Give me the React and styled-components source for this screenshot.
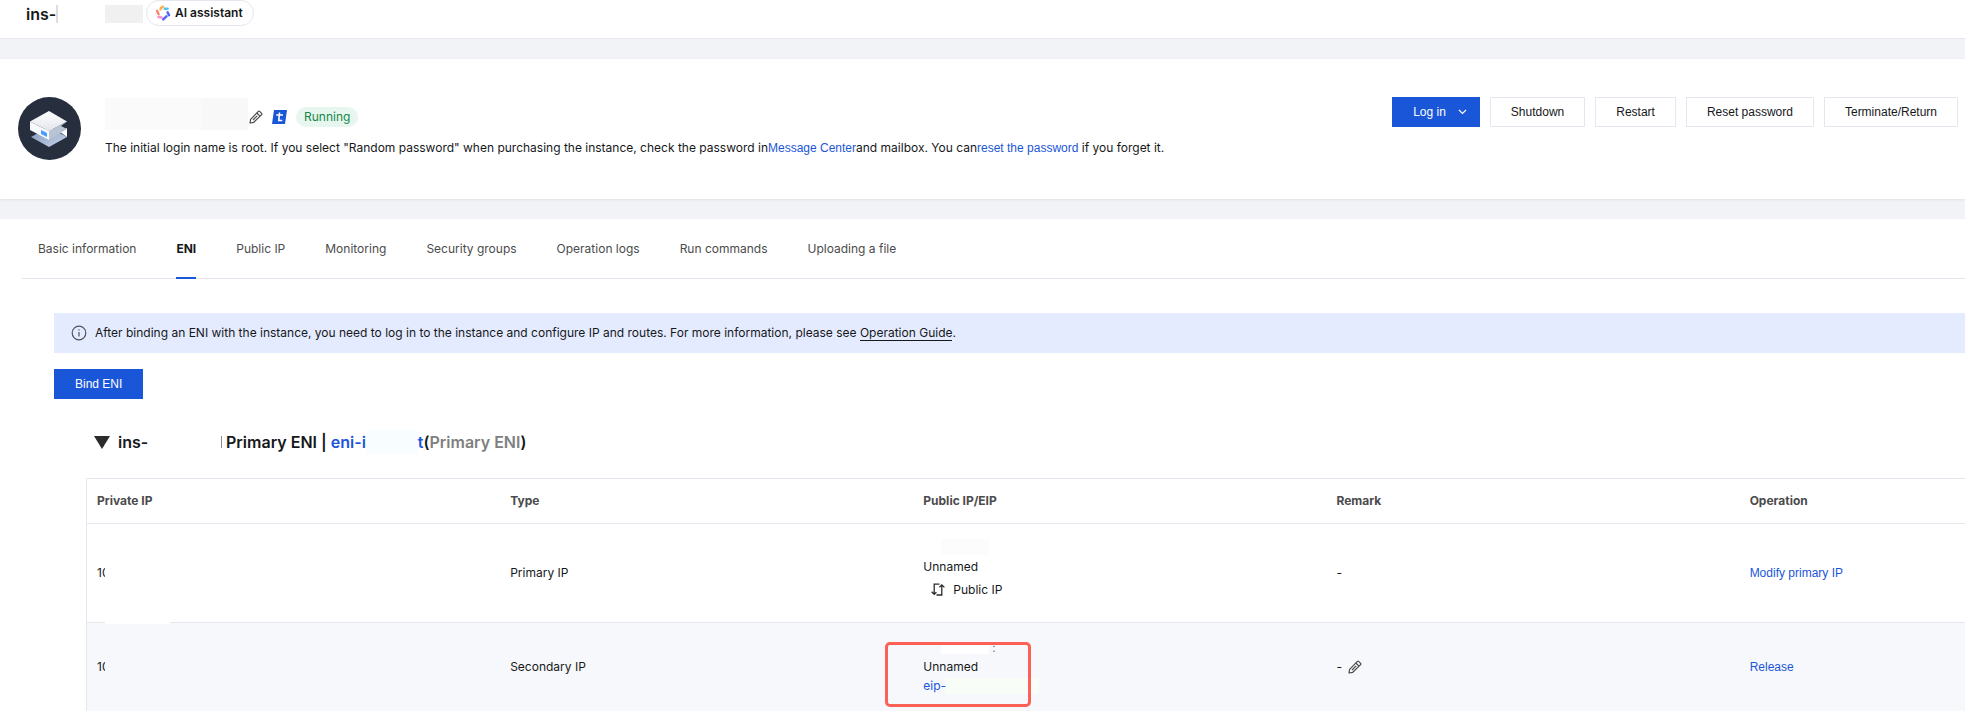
import React from "react";
import styled, { createGlobalStyle } from "styled-components";

const GlobalStyle = createGlobalStyle`
  * {
    box-sizing: border-box;
  }

  body {
    margin: 0;
    overflow-x: hidden;
    background: #f2f3f7;
    color: #16181a;
    font-family: Inter, "Liberation Sans", sans-serif;
    font-size: 12px;
    line-height: 18px;
  }
`;

const TopBar = styled.header`
  display: flex;
  align-items: flex-start;
  height: 39px;
  padding-left: 26px;
  background: #ffffff;
  border-bottom: 1px solid #e5e7ef;
`;

const PageTitle = styled.h1`
  width: 79px;
  margin: 5px 0 0;
  font-size: 16px;
  font-weight: 600;
  line-height: 18px;
`;

const Caret = styled.span`
  display: inline-block;
  width: ${props => props.$width || 1}px;
  height: ${props => props.$height}px;
  background: ${props => props.$color};
  vertical-align: top;
`;

const Mask = styled.span`
  flex: none;
  display: block;
  width: ${props => props.$width}px;
  height: ${props => props.$height}px;
  background: ${props => props.$color};
`;

const HeaderMask = styled(Mask)`
  margin: 5px 3px 0 0;
`;

const AssistantButton = styled.button`
  display: flex;
  align-items: center;
  gap: 4px;
  height: 26px;
  padding: 0 10px 0 8px;
  border: 1px solid #e5e7ef;
  border-radius: 13px;
  background: #ffffff;
  color: #16181a;
  font: 600 12px/18px Inter, sans-serif;
`;

const Panel = styled.section`
  background: #ffffff;
  margin-top: 20px;
`;

const Summary = styled(Panel)`
  display: flex;
  align-items: flex-start;
  height: 140px;
  padding: 38px 7px 0 18px;
  box-shadow: 0 1px 3px #00000014;
`;

const SummaryText = styled.div`
  flex: 1;
  margin-left: 24px;

  p {
    margin: 3px 0 0;
  }
`;

const NameRow = styled.div`
  display: flex;
  align-items: center;
  height: 39px;
`;

const NameMask = styled(Mask)`
  align-self: flex-start;
  margin-top: 1px;
`;

const IconButton = styled.button`
  display: inline-flex;
  flex: none;
  padding: 0;
  border: 0;
  background: none;
  color: #4b4b4b;
  vertical-align: middle;
  margin-left: ${props => props.$gap || 0}px;
`;

const Status = styled.span`
  margin-left: 9px;
  padding: 1px 8px;
  border-radius: 10px;
  background: #e7f6ee;
  color: #148a47;
`;

const Link = styled.a`
  color: #1a56d8;
  font-family: ${props => (props.$inherit ? "inherit" : '"Liberation Sans", Arial, sans-serif')};
  text-decoration: none;
`;

const Actions = styled.div`
  display: flex;
  gap: 10px;
`;

const Button = styled.button`
  display: flex;
  align-items: center;
  justify-content: center;
  gap: 12px;
  height: 30px;
  padding: 0 20px;
  border: 1px solid ${props => (props.$primary ? "#1a56d8" : "#e5e7ef")};
  background: ${props => (props.$primary ? "#1a56d8" : "#ffffff")};
  color: ${props => (props.$primary ? "#ffffff" : "#16181a")};
  font: 12px/18px "Liberation Sans", Arial, sans-serif;
  white-space: nowrap;
`;

const LoginButton = styled(Button)`
  padding-right: 12px;
`;

const Tabs = styled.nav`
  display: flex;
  gap: 40px;
  height: 60px;
  margin-left: 22px;
  padding-left: 16px;
  border-bottom: 1px solid #e5e7ef;
`;

const Tab = styled.a`
  height: 60px;
  padding-top: 21px;
  border-bottom: 2px solid ${props => (props.$active ? "#1a56d8" : "transparent")};
  color: ${props => (props.$active ? "#16181a" : "#4b4b4b")};
  font-weight: ${props => (props.$active ? 700 : 400)};
  text-decoration: none;
`;

const TabBody = styled.div`
  padding: 34px 0 0 54px;
`;

const Notice = styled.div`
  display: flex;
  align-items: center;
  gap: 8px;
  height: 40px;
  margin-bottom: 16px;
  padding-left: 17px;
  background: #e5ebff;

  a {
    color: inherit;
    text-decoration: none;
    border-bottom: 1px solid #16181a;
  }
`;

const EniTitle = styled.h2`
  display: flex;
  align-items: center;
  height: 24px;
  margin: 31px 0 24px 40px;
  font-size: 16px;
  font-weight: 600;
  white-space: pre;

  svg {
    margin-right: 8px;
  }
`;

const InstanceId = styled.span`
  width: 103px;
`;

const Muted = styled.span`
  color: #808080;
`;

const TableFrame = styled.div`
  margin-left: 32px;
  border: solid #e5e7ef;
  border-width: 1px 0 0 1px;
  overflow: hidden;
`;

// five equal columns, a little wider than the frame
const Table = styled.table`
  width: 110%;
  table-layout: fixed;
  border-collapse: collapse;

  th {
    height: 44px;
    padding: 0 10px;
    border-bottom: 1px solid #e5e7ef;
    color: #4b4b4b;
    font-weight: 700;
    text-align: left;
  }

  td {
    padding: 0 10px;
    vertical-align: middle;
  }
`;

const Row = styled.tr`
  height: ${props => props.$height}px;
  background: ${props => (props.$shaded ? "#f7f8fc" : "#ffffff")};

  td {
    border-bottom: 1px solid #e5e7ef;
  }
`;

const Address = styled.div`
  position: relative;
`;

const AddressMask = styled(Mask)`
  position: absolute;
  top: 0;
  left: 8px;
`;

const PublicAddress = styled.div`
  position: relative;
  padding-bottom: ${props => props.$bottom || 0}px;
`;

const Line = styled.div`
  display: flex;
  align-items: center;
  height: ${props => props.$height || 18}px;
  padding-left: ${props => props.$indent || 0}px;
  gap: ${props => props.$gap || 0}px;
`;

const Highlight = styled.div`
  position: absolute;
  top: 4px;
  left: -38px;
  width: 146px;
  height: 65px;
  border: 3px solid #fb6156;
  border-radius: 5px;
  pointer-events: none;
`;

function PencilIcon() {
  return (
    <svg width="14" height="14" viewBox="0 0 14 14" fill="none" stroke="currentColor" strokeWidth="1.2" strokeLinejoin="round">
      <path d="M1 13 L1.6 9.3 L9.4 1.4 Q10 .8 10.6 1.4 L12.6 3.4 Q13.2 4 12.6 4.6 L4.8 12.3 Z" />
      <path d="M7.8 3 L11 6.2 M8.2 5.8 L4 10" />
    </svg>
  );
}

function AssistantIcon() {
  return (
    <svg width="16" height="16" viewBox="0 0 16 16" fill="none" strokeWidth="2.5" strokeLinecap="round" strokeLinejoin="round">
      <path d="M5.6 4.2 L6 3 L8 1.7" stroke="#ffad45" />
      <path d="M9.7 3.8 L12.6 3.8" stroke="#54c5f8" />
      <path d="M12.6 7.3 L14 10.2" stroke="#4a68fb" />
      <path d="M11.4 11.3 L8.2 14.3" stroke="#5b62f5" />
      <path d="M6.6 12.6 L3.4 12" stroke="#f793c8" />
      <path d="M3.6 9.2 L2 5.8" stroke="#ff8667" />
    </svg>
  );
}

function ServerIcon() {
  return (
    <svg width="63" height="63" viewBox="0 0 63 63">
      <defs>
        <linearGradient id="lid" x1="0" y1="0" x2="0" y2="1">
          <stop offset="0" stopColor="#ffffff" />
          <stop offset="1" stopColor="#e3e5eb" />
        </linearGradient>
        <linearGradient id="base" x1="0" y1="0" x2="1" y2="1">
          <stop offset="0" stopColor="#8196b9" />
          <stop offset="1" stopColor="#c9d5e9" />
        </linearGradient>
      </defs>
      <circle cx="31.5" cy="31.5" r="31.5" fill="#272e3e" />
      <path d="M13 40 L31 30 L49 40 L31 50 Z" fill="url(#base)" />
      <path d="M42 35 L49 31 V40 Z" fill="#ffffff" />
      <path d="M31 34 L49 24.500 L43 29 L49 32 L31 43 Z" fill="#bac3d3" />
      <path d="M12 24.500 L31 34 V43 L12 33 Z" fill="#f7f9fc" />
      <path d="M31 14 L49 24.500 L31 34 L12 24.500 Z" fill="url(#lid)" />
      <path d="M23 33 L29 36 V40 L23 37 Z" fill="#4c9afa" />
    </svg>
  );
}

function TagLogo() {
  return (
    <svg width="15" height="14" viewBox="0 0 15 14">
      <path d="M2 0 H15 L13 14 H0 Z" fill="#1a56d8" />
      <path d="M4.300 5 H11 M7.500 2.500 L6.800 10.500 H10.300" fill="none" stroke="#ffffff" strokeWidth="1.600" />
    </svg>
  );
}

function InfoIcon() {
  return (
    <svg width="16" height="16" viewBox="0 0 16 16" fill="none" stroke="#4d5160" strokeWidth="1.200">
      <circle cx="8" cy="8" r="6.800" />
      <path d="M8 7 V11.500 M8 4.300 V5.600" />
    </svg>
  );
}

function SwapIcon() {
  return (
    <svg width="14" height="13" viewBox="0 0 14 13" fill="none" stroke="#2b2b2b" strokeWidth="1.300">
      <path d="M8.500 1.200 H3.200 V11 M.6 8.800 L3.200 11.400 L5.400 9.200" />
      <path d="M5.500 12 H10.800 V2 M8.400 4.200 L10.800 1.800 L13.400 4.400" />
    </svg>
  );
}

const actions = ["Shutdown", "Restart", "Reset password", "Terminate/Return"];

const tabs = [
  "Basic information",
  "ENI",
  "Public IP",
  "Monitoring",
  "Security groups",
  "Operation logs",
  "Run commands",
  "Uploading a file",
];

const columns = ["Private IP", "Type", "Public IP/EIP", "Remark", "Operation"];

class App extends React.Component {
  constructor(props) {
    super(props);
    this.state = { tab: "ENI" };
  }

  render() {
    return (
      <>
        <GlobalStyle />
        <TopBar>
          <PageTitle>
            ins-<Caret $width={2} $height={18} $color="#dedede" />
          </PageTitle>
          <HeaderMask $width={38} $height={18} $color="#f0f0f0" />
          <AssistantButton type="button">
            <AssistantIcon />
            AI assistant
          </AssistantButton>
        </TopBar>

        <Summary>
          <ServerIcon />
          <SummaryText>
            <NameRow>
              <NameMask $width={98} $height={32} $color="#fafafa" />
              <NameMask $width={45} $height={32} $color="#f8f8f8" />
              <IconButton type="button" aria-label="Rename" $gap={1}>
                <PencilIcon />
              </IconButton>
              <IconButton type="button" aria-label="Tags" $gap={9}>
                <TagLogo />
              </IconButton>
              <Status>Running</Status>
            </NameRow>
            <p>
              The initial login name is root. If you select "Random password" when purchasing the instance, check the
              password in<Link href="#messages">Message Center</Link>and mailbox. You can
              <Link href="#reset">reset the password</Link> if you forget it.
            </p>
          </SummaryText>
          <Actions>
            <LoginButton type="button" $primary>
              Log in
              <svg width="9" height="6" viewBox="0 0 9 6" fill="none" stroke="#ffffff" strokeWidth="1.200">
                <path d="M1 1 L4.500 4.500 L8 1" />
              </svg>
            </LoginButton>
            {actions.map(action => (
              <Button type="button" key={action}>
                {action}
              </Button>
            ))}
          </Actions>
        </Summary>

        <Panel>
          <Tabs>
            {tabs.map(tab => (
              <Tab key={tab} href="#tab" $active={tab === this.state.tab} onClick={() => this.setState({ tab })}>
                {tab}
              </Tab>
            ))}
          </Tabs>
          <TabBody>
            <Notice>
              <InfoIcon />
              <span>
                After binding an ENI with the instance, you need to log in to the instance and configure IP and routes.
                For more information, please see <a href="#guide">Operation Guide</a>.
              </span>
            </Notice>
            <Button type="button" $primary>
              Bind ENI
            </Button>
            <EniTitle>
              <svg width="16" height="13" viewBox="0 0 16 13">
                <path d="M0 0 H16 L8 13 Z" fill="#2b2b2b" />
              </svg>
              <InstanceId>ins-</InstanceId>
              <Caret $height={12} $color="#8a8a8a" />
              {" Primary ENI | "}
              <Link href="#eni" $inherit>eni-i</Link>
              <Mask $width={52} $height={24} $color="#f8fdff" />
              <Link href="#eni" $inherit>t</Link>(<Muted>Primary ENI</Muted>)
            </EniTitle>
            <TableFrame>
              <Table>
                <thead>
                  <tr>
                    {columns.map(column => (
                      <th key={column} scope="col">{column}</th>
                    ))}
                  </tr>
                </thead>
                <tbody>
                  <Row $height={99}>
                    <td>
                      <Address>
                        10
                        <AddressMask $width={65} $height={60} $color="#ffffff" />
                      </Address>
                    </td>
                    <td>Primary IP</td>
                    <td>
                      <PublicAddress $bottom={6}>
                        <Line $height={22} $indent={18}>
                          <Mask $width={48} $height={16} $color="#fcfcfc" />
                        </Line>
                        <Line>Unnamed</Line>
                        <Line $height={28} $indent={8} $gap={8}>
                          <SwapIcon />
                          Public IP
                        </Line>
                      </PublicAddress>
                    </td>
                    <td>-</td>
                    <td><Link href="#modify">Modify primary IP</Link></td>
                  </Row>
                  <Row $height={90} $shaded>
                    <td>
                      <Address>
                        10
                        <AddressMask $width={65} $height={18} $color="#f7f8fc" />
                      </Address>
                    </td>
                    <td>Secondary IP</td>
                    <td>
                      <PublicAddress>
                        <Line $height={20} $indent={18} $gap={3}>
                          <Mask $width={48} $height={12} $color="#ffffff" />
                          <Muted>:</Muted>
                        </Line>
                        <Line>Unnamed</Line>
                        <Line $height={20}>
                          <Link href="#eip" $inherit>eip-</Link>
                          <Mask $width={93} $height={16} $color="#f9fdf8" />
                        </Line>
                        <Highlight />
                      </PublicAddress>
                    </td>
                    <td>
                      <Line $gap={6}>
                        -
                        <IconButton type="button" aria-label="Edit remark">
                          <PencilIcon />
                        </IconButton>
                      </Line>
                    </td>
                    <td><Link href="#release">Release</Link></td>
                  </Row>
                </tbody>
              </Table>
            </TableFrame>
          </TabBody>
        </Panel>
      </>
    );
  }
}

export default App;
